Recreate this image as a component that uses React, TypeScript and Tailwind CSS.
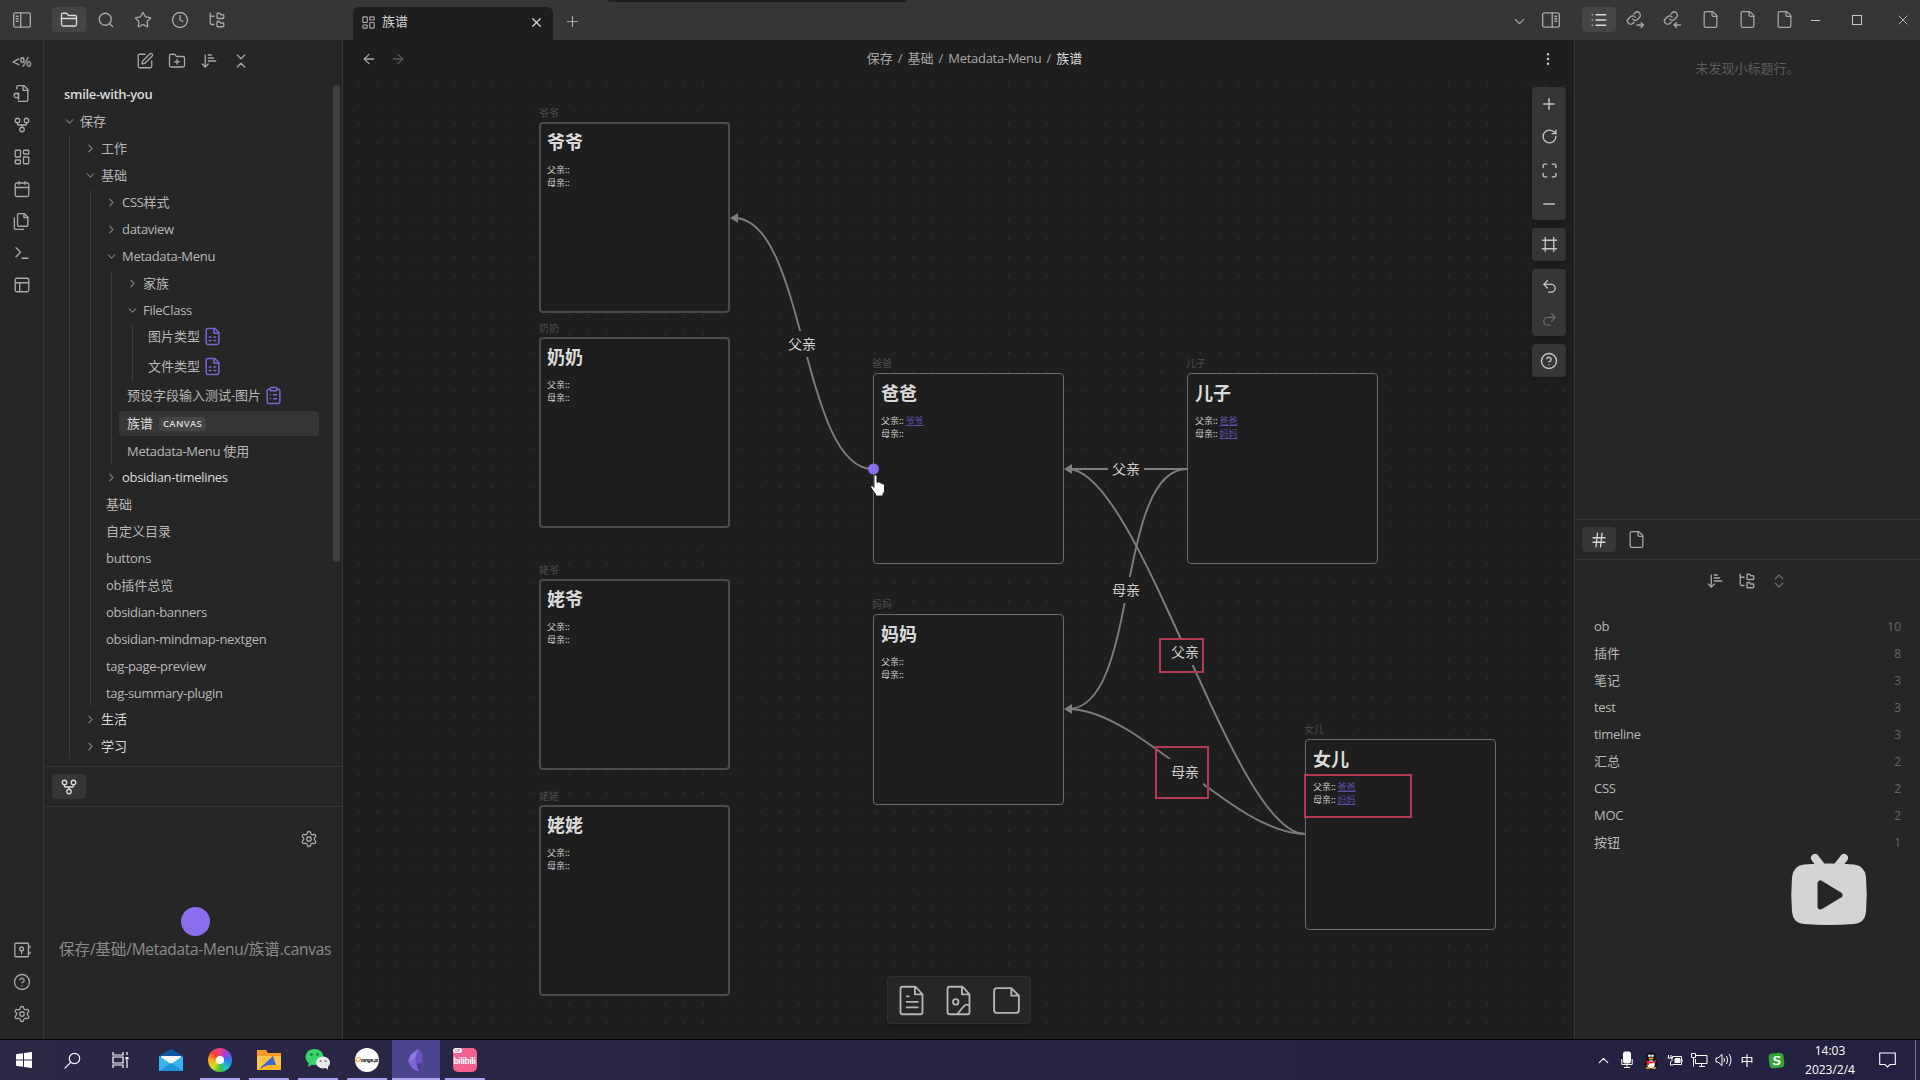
import React from "react";
import type { ReactNode } from "react";
import {
  FolderClosed, Search, Star, Clock, FolderTree, SquarePen, FolderPlus, ArrowDownNarrowWide,
  ChevronsDownUp, ChevronsUpDown, GitFork, LayoutDashboard, PanelsTopLeft, CircleQuestionMark,
  Settings, X, Plus, Minus, ChevronDown, ChevronRight, ChevronUp, ArrowLeft, ArrowRight, EllipsisVertical,
  List, File, RotateCw, Maximize, Frame, Undo2, Redo2, Hash, ClipboardList,
} from "lucide-react";

const I = { size: 18, strokeWidth: 1.75 };

function Svg({ size = 18, sw = 1.75, children, className = "" }: { size?: number; sw?: number; children: ReactNode; className?: string }) {
  return (
    <svg width={size} height={size} viewBox="0 0 24 24" fill="none" stroke="currentColor" strokeWidth={sw} strokeLinecap="round" strokeLinejoin="round" className={className}>
      {children}
    </svg>
  );
}

/* Latin runs are set slightly tighter than the Chinese text around them. */
function Txt({ children }: { children: string }) {
  return (
    <>
      {children.split(/([\x20-\x7e]+)/).filter(Boolean).map((part, i) =>
        /^[\x20-\x7e]/.test(part) ? <span key={i} className="tracking-[-0.3px]">{part}</span> : part
      )}
    </>
  );
}

function PanelIcon({ right = false }: { right?: boolean }) {
  return (
    <Svg size={20} sw={1.6} className={right ? "-scale-x-100" : ""}>
      <rect x="2" y="3.5" width="20" height="17" rx="2" />
      <path d="M10.500 3.500v17M5 7.500h2.500M5 10.500h2.500M5 13.500h2.500" />
    </Svg>
  );
}

function LinkIcon({ incoming = false }: { incoming?: boolean }) {
  return (
    <Svg size={19} sw={1.7} className="-ml-px">
      <path d="M8.500 11.500a4 4 0 0 0 6 .4l2.500-2.500a4 4 0 0 0-5.700-5.700l-1.400 1.400" />
      <path d="M11.600 9a4 4 0 0 0-6-.4L3.100 11.100a4 4 0 0 0 5.700 5.700l1.400-1.400" />
      {incoming ? <path d="M22 19h-8M17 16l-3 3 3 3" /> : <path d="M14 19h8M19 16l3 3-3 3" />}
    </Svg>
  );
}

function FileSearchLeft() {
  return (
    <Svg size={19} sw={1.7}>
      <path d="M6 6V4a2 2 0 0 1 2-2h7l5 5v13a2 2 0 0 1-2 2H8" />
      <path d="M14 2v6h6" />
      <circle cx="5.500" cy="14.500" r="2.800" />
      <path d="M8.300 11.500v8" />
    </Svg>
  );
}

function FileFields() {
  return (
    <Svg size={19} sw={1.9}>
      <path d="M15 2H6a2 2 0 0 0-2 2v16a2 2 0 0 0 2 2h12a2 2 0 0 0 2-2V7Z" />
      <path d="M14 2v6h6M8 12.500h2M14 12.500h2M8 17h2M14 17h2" />
    </Svg>
  );
}

function Btn({ active = false, children }: { active?: boolean; children: ReactNode }) {
  return (
    <div className={"flex h-[25px] w-[34px] shrink-0 items-center justify-center rounded " + (active ? "bg-[#454545] text-[#dadada]" : "")}>
      {children}
    </div>
  );
}

function TitleBar() {
  return (
    <header className="relative flex h-10 shrink-0 bg-[#363636] text-[#a8a8a8]">
      <div className="absolute left-[608px] top-0 h-[2px] w-[299px] rounded-b bg-[#1f1f1f]" />
      <div className="flex w-[353px] pt-[7px]">
        <div className="flex h-[25px] w-[52px] items-center pl-3"><PanelIcon /></div>
        <div className="flex gap-[3px]">
          <Btn active><FolderClosed {...I} /></Btn>
          <Btn><Search {...I} /></Btn>
          <Btn><Star {...I} /></Btn>
          <Btn><Clock {...I} /></Btn>
          <Btn><FolderTree {...I} /></Btn>
        </div>
      </div>
      <div className="mt-[7px] flex h-[33px] w-[200px] items-center rounded-t-md bg-[#1e1e1e] pb-[3px] pl-[8px] pr-[9px] text-[#d4d4d4]">
        <LayoutDashboard size={15} strokeWidth={1.9} className="text-[#a8a8a8]" />
        <span className="ml-[6px] flex-1 text-[13px]">族谱</span>
        <X size={15} strokeWidth={2} />
      </div>
      <div className="flex h-10 w-[38px] items-center justify-center pt-[2px]"><Plus size={17} strokeWidth={1.75} /></div>
      <div className="flex-1" />
      <div className="flex items-center">
        <div className="flex w-8 justify-center pt-[2px]"><ChevronDown size={17} strokeWidth={1.75} /></div>
        <div className="flex w-8 justify-center"><PanelIcon right /></div>
      </div>
      <div className="ml-[15px] mt-[7px] flex h-[25px] gap-[3px]">
        <Btn active><List {...I} /></Btn>
        <Btn><LinkIcon /></Btn>
        <Btn><LinkIcon incoming /></Btn>
        <Btn><File size={19} strokeWidth={1.6} /></Btn>
        <Btn><File size={19} strokeWidth={1.6} /></Btn>
        <Btn><File size={19} strokeWidth={1.6} /></Btn>
      </div>
      <div className="flex w-[119px] items-center pl-[10px] text-[#c0c0c0]">
        <div className="h-px w-[9px] bg-[#c8c8c8]" />
        <div className="ml-[32px] size-[10px] border border-[#c8c8c8]" />
        <Svg size={14} sw={1.5} className="ml-[34px]"><path d="M5 5l14 14M19 5L5 19" /></Svg>
      </div>
    </header>
  );
}

function Ribbon() {
  return (
    <nav className="flex w-11 shrink-0 flex-col items-center border-r border-[#363636] pt-[5px] text-[#a8a8a8]">
      {[
        <span className="text-[14px] font-semibold tracking-tight">&lt;%</span>,
        <FileSearchLeft />,
        <GitFork {...I} />,
        <LayoutDashboard {...I} />,
        <Svg><rect x="3" y="4" width="18" height="18" rx="2" /><path d="M16 2v4M8 2v4M3 10h18" /></Svg>,
        <Svg size={19}><path d="M15.500 2H8.600C7.700 2 7 2.700 7 3.600v12.800c0 .9.700 1.600 1.600 1.600h9.800c.9 0 1.600-.7 1.600-1.600V6.500z" /><path d="M3 7.600v12.800c0 .9.700 1.600 1.600 1.600h9.800M15 2v5h5" /></Svg>,
        <Svg><path d="M4 17l6-6-6-6M12 19h8" /></Svg>,
        <PanelsTopLeft {...I} />,
      ].map((ic, i) => (
        <div key={i} className="flex h-8 w-full items-center justify-center">{ic}</div>
      ))}
      <div className="flex-1" />
      <div className="flex h-8 items-center">
        <Svg><rect x="2.500" y="3" width="18" height="18" rx="1" /><circle cx="11.500" cy="10.500" r="2.500" /><path d="M11.500 13v4M22.500 7v2M22.500 15v2" /></Svg>
      </div>
      <div className="flex h-8 items-center"><CircleQuestionMark {...I} /></div>
      <div className="mb-[9px] flex h-8 items-center"><Settings {...I} /></div>
    </nav>
  );
}

type RowProps = { name: string; fold?: "open" | "closed"; icon?: ReactNode; mt?: string; bright?: boolean };

function Row({ name, fold, icon, mt = "mt-[2px]", bright = false }: RowProps) {
  return (
    <div className={"flex h-[25px] items-center whitespace-nowrap " + mt + (bright ? " text-[#dcdcdc]" : "")}>
      {fold ? (
        <span className="-ml-[3px] flex w-[17px] text-[#7a7a7a]">
          {fold === "open" ? <ChevronDown size={13} strokeWidth={2.2} /> : <ChevronRight size={13} strokeWidth={2.2} />}
        </span>
      ) : null}
      <span><Txt>{name}</Txt></span>
      {icon ? <span className="ml-[3px] text-[#7d64d0]">{icon}</span> : null}
    </div>
  );
}

function Tree() {
  return (
    <div className="mt-[2px] pl-[21px] text-[13px] text-[#b8b8b8]">
      <div className="ml-px mt-px"><Row name="保存" fold="open" mt="" /></div>
      <div className="ml-[4px] border-l border-[#3c3c3c] pl-[17px]">
        <Row name="工作" fold="closed" />
        <Row name="基础" fold="open" />
        <div className="ml-[3px] border-l border-[#3c3c3c] pl-[17px]">
          <Row name="CSS样式" fold="closed" />
          <Row name="dataview" fold="closed" />
          <Row name="Metadata-Menu" fold="open" />
          <div className="ml-[3px] border-l border-[#3c3c3c] pl-[17px]">
            <Row name="家族" fold="closed" />
            <Row name="FileClass" fold="open" />
            <div className="ml-[3px] border-l border-[#3c3c3c] pb-[2px] pl-[15px]">
              <Row name="图片类型" icon={<FileFields />} mt="mt-px" />
              <Row name="文件类型" icon={<FileFields />} mt="mt-[5px]" />
            </div>
            <div className="-ml-[2px]">
              <Row name="预设字段输入测试-图片" icon={<ClipboardList size={19} strokeWidth={1.9} />} />
              <div className="-ml-2 mt-[3px] flex h-[25px] w-[200px] items-center rounded bg-[#363636] pl-2 text-[#dcdcdc]">
                <span>族谱</span>
                <span className="ml-[6px] rounded bg-[#454545] px-1 text-[9.500px] font-semibold leading-[14px] tracking-[0.3px]">CANVAS</span>
              </div>
              <Row name="Metadata-Menu 使用" mt="mt-[3px]" />
            </div>
          </div>
          <div className="-mt-px"><Row name="obsidian-timelines" fold="closed" bright /></div>
          <div className="-ml-[2px]">
            <Row name="基础" />
            <Row name="自定义目录" />
            <Row name="buttons" />
            <Row name="ob插件总览" />
            <Row name="obsidian-banners" />
            <Row name="obsidian-mindmap-nextgen" />
            <Row name="tag-page-preview" />
            <Row name="tag-summary-plugin" />
          </div>
        </div>
        <Row name="生活" fold="closed" bright mt="mt-px" />
        <Row name="学习" fold="closed" bright />
      </div>
    </div>
  );
}

function LeftSidebar() {
  return (
    <aside className="flex w-[299px] shrink-0 flex-col border-r border-[#363636]">
      <div className="flex h-[42px] items-center gap-[14px] pl-[92px] text-[#a8a8a8]">
        <SquarePen {...I} />
        <FolderPlus {...I} />
        <ArrowDownNarrowWide {...I} />
        <ChevronsDownUp {...I} />
      </div>
      <div className="relative h-[684px] shrink-0 overflow-hidden">
        <div className="h-[25px] pl-5 text-[13px] font-semibold leading-[25px] text-[#dadada]"><Txt>smile-with-you</Txt></div>
        <Tree />
        <div className="absolute right-[2px] top-[3px] h-[477px] w-[7px] rounded-full bg-[#3f3f3f]" />
      </div>
      <div className="flex h-[41px] shrink-0 border-y border-[#363636] pl-2 pt-[7px]">
        <div className="flex h-[25px] w-[34px] items-center justify-center rounded bg-[#363636] text-[#dadada]"><GitFork {...I} /></div>
      </div>
      <div className="flex flex-1 flex-col items-center">
        <div className="mt-[23px] self-end pr-[24px] text-[#a8a8a8]"><Settings {...I} /></div>
        <div className="mr-[-5px] mt-[59px] size-[29px] rounded-full bg-[#8a6ded]" />
        <div className="mr-[-4px] mt-[2px] whitespace-nowrap text-[15.500px] leading-[22px] text-[#8c8c8c]"><Txt>保存/基础/Metadata-Menu/族谱.canvas</Txt></div>
      </div>
    </aside>
  );
}

type Node = { name: string; pos: string; thick?: boolean; father?: string; mother?: string };

const nodes: Node[] = [
  { name: "爷爷", pos: "left-[196px] top-[44px]", thick: true },
  { name: "奶奶", pos: "left-[196px] top-[259px]", thick: true },
  { name: "姥爷", pos: "left-[196px] top-[501px]", thick: true },
  { name: "姥姥", pos: "left-[196px] top-[727px]", thick: true },
  { name: "爸爸", pos: "left-[530px] top-[295px]", father: "爷爷" },
  { name: "妈妈", pos: "left-[530px] top-[535.500px]" },
  { name: "儿子", pos: "left-[844px] top-[295px]", father: "爸爸", mother: "妈妈" },
  { name: "女儿", pos: "left-[962px] top-[661px]", father: "爸爸", mother: "妈妈" },
];

function Field({ label, value }: { label: string; value?: string }) {
  return (
    <div>
      {label}<span className="font-semibold tracking-[-0.2px]">::</span>{value ? <span className="ml-[2px] text-[#5f4da8] underline">{value}</span> : null}
    </div>
  );
}

function Card({ n }: { n: Node }) {
  return (
    <div className={"absolute size-[191px] rounded-[4px] bg-[#1e1e1e] " + n.pos + (n.thick ? " border-2 border-[#4c4c4c] p-[6px]" : " border border-[#6a6a6a] p-[7px]")}>
      <div className="absolute -top-[18px] -left-[2px] text-[10px] leading-[14px] text-[#4d4d4d]">{n.name}</div>
      <div className="-mt-px text-[18px] font-bold leading-[26px] text-[#dadada]">{n.name}</div>
      <div className="mt-[8px] text-[9px] leading-[13px] text-[#cfcfcf]">
        <Field label="父亲" value={n.father} />
        <Field label="母亲" value={n.mother} />
      </div>
    </div>
  );
}

function EdgeLabel({ pos, text }: { pos: string; text: string }) {
  return <div className={"absolute h-[26px] w-[36px] bg-[#1e1e1e] text-center text-[14px] leading-[26px] text-[#cfcfcf] " + pos}>{text}</div>;
}

function Canvas() {
  return (
    <main className="flex w-[1231px] shrink-0 flex-col bg-[#1e1e1e]">
      <div className="flex h-[38px] shrink-0 items-center text-[13px] text-[#a8a8a8]">
        <div className="flex w-[300px] gap-[13px] pl-[18px]">
          <ArrowLeft size={16} strokeWidth={1.900} />
          <ArrowRight size={16} strokeWidth={1.900} className="text-[#5a5a5a]" />
        </div>
        <div className="flex flex-1 justify-center gap-[5px] pl-[32px]">
          <span>保存</span><span>/</span><span>基础</span><span>/</span><span><Txt>Metadata-Menu</Txt></span><span>/</span>
          <span className="text-[#dadada]">族谱</span>
        </div>
        <div className="flex w-[300px] justify-end pr-[18px] text-[#cfcfcf]"><EllipsisVertical size={16} strokeWidth={1.700} /></div>
      </div>
      <div className="relative flex-1 overflow-hidden bg-[radial-gradient(circle_at_50%_50%,#2b2b2b_0.8px,transparent_1.100px)] bg-[length:19.13px_19.13px] bg-[position:6.200px_-2.300px]">
        {nodes.map((n) => <Card key={n.name} n={n} />)}
        <svg width="1231" height="961" viewBox="343 78 1231 961" className="absolute left-0 top-0" fill="none" stroke="#7d7d7d" strokeWidth="1.900">
          <path d="M873 469C801 469 806 218 734 218" />
          <path d="M1187 469H1068" />
          <path d="M1187 469C1115 469 1140 709 1068 709" />
          <path d="M1305 834C1233 834 1140 469 1068 469" />
          <path d="M1305 834C1233 834 1140 709 1068 709" />
          <g fill="#7d7d7d" stroke="none">
            <path d="M730 218l8-5v10z" />
            <path d="M1064 469l8-5v10z" />
            <path d="M1064 709l8-5v10z" />
          </g>
          <circle cx="873.500" cy="469" r="5.500" fill="#8a6ded" stroke="none" />
        </svg>
        <EdgeLabel pos="left-[441px] top-[253px]" text="父亲" />
        <EdgeLabel pos="left-[765px] top-[378px]" text="父亲" />
        <EdgeLabel pos="left-[765px] top-[499px]" text="母亲" />
        <EdgeLabel pos="left-[824px] top-[561px]" text="父亲" />
        <EdgeLabel pos="left-[824px] top-[681px]" text="母亲" />
        <div className="absolute left-[816px] top-[560px] h-[35px] w-[45px] border-2 border-[#b23a52]" />
        <div className="absolute left-[812px] top-[668px] h-[53px] w-[54px] border-2 border-[#b23a52]" />
        <div className="absolute left-[961px] top-[696px] h-[44px] w-[108px] border-2 border-[#b23a52]" />
        <svg width="18" height="24" viewBox="0 0 18 24" className="absolute left-[526px] top-[396px]">
          <path d="M5 2.500c0-2 3-2 3 0v6l1-.5c1-.5 1.900 0 2 1 .8-.5 2-.2 2.200 1 1-.4 2.300.2 2.300 1.500v4.500c0 2-.8 3-1.500 4v2H6.500v-2c-1.500-1.500-3-4-4.500-6.500-.8-1.600.8-2.600 2-1.300l1 1.200z" fill="#fff" stroke="#111" strokeWidth="0.900" />
        </svg>
        <div className="absolute right-2 top-[9px] flex w-[34px] flex-col gap-2 text-[#c4c4c4]">
          <Tools>
            <Plus size={18} strokeWidth={1.900} /><RotateCw size={17} strokeWidth={1.900} /><Maximize size={17} strokeWidth={1.900} /><Minus size={18} strokeWidth={1.900} />
          </Tools>
          <Tools><Frame size={17} strokeWidth={1.900} /></Tools>
          <Tools><Undo2 size={17} strokeWidth={1.900} /><Redo2 size={17} strokeWidth={1.900} className="text-[#6a6a6a]" /></Tools>
          <Tools><CircleQuestionMark size={18} strokeWidth={1.900} /></Tools>
        </div>
        <div className="absolute left-[544px] top-[898px] flex h-12 w-36 items-center justify-around rounded border border-[#303030] bg-[#262626] text-[#b4b4b4] shadow-md">
          <Svg size={33} sw={1.350}><path d="M15 2H5.500A1.500 1.500 0 0 0 4 3.500v17A1.500 1.500 0 0 0 5.500 22h13a1.500 1.500 0 0 0 1.500-1.500V7.500zM14.500 2v5.500H20M8.500 9h1.500M8.500 13h8M8.500 17h8" /></Svg>
          <Svg size={33} sw={1.350}><path d="M15 2H5.500A1.500 1.500 0 0 0 4 3.500v17A1.500 1.500 0 0 0 5.500 22h13a1.500 1.500 0 0 0 1.500-1.500V7.500zM14.500 2v5.500H20M11 22l5-6c1.500-1.500 2.500-1.500 4 0" /><circle cx="10" cy="13" r="2" /></Svg>
          <Svg size={33} sw={1.350}><path d="M15.500 3H5a2 2 0 0 0-2 2v14a2 2 0 0 0 2 2h14a2 2 0 0 0 2-2V8.500zM15.500 3v5.500H21" /></Svg>
        </div>
      </div>
    </main>
  );
}

function Tools({ children }: { children: ReactNode }) {
  return (
    <div className="flex flex-col rounded bg-[#363636] shadow-md">
      {React.Children.map(children, (c) => <div className="flex h-[33.300px] items-center justify-center">{c}</div>)}
    </div>
  );
}

const tags: [string, number][] = [["ob", 10], ["插件", 8], ["笔记", 3], ["test", 3], ["timeline", 3], ["汇总", 2], ["CSS", 2], ["MOC", 2], ["按钮", 1]];

function RightSidebar() {
  return (
    <aside className="relative flex flex-1 flex-col border-l border-[#363636]">
      <div className="h-[479px] shrink-0 pt-[18px] text-center text-[13px] leading-5 text-[#5c5c5c]">未发现小标题行。</div>
      <div className="flex h-[41px] shrink-0 gap-[3px] border-y border-[#363636] pl-[7px] pt-[7px] text-[#a8a8a8]">
        <div className="flex h-[25px] w-[34px] items-center justify-center rounded bg-[#363636] text-[#dadada]"><Hash {...I} /></div>
        <Btn><File size={19} strokeWidth={1.600} /></Btn>
      </div>
      <div className="flex h-[42px] items-center gap-[14px] pl-[131px] text-[#a8a8a8]">
        <ArrowDownNarrowWide {...I} />
        <FolderTree {...I} />
        <ChevronsUpDown {...I} className="text-[#6a6a6a]" />
      </div>
      <ul className="mt-[11px] pl-[19px] pr-[19px] text-[13px] text-[#b8b8b8]">
        {tags.map(([t, n]) => (
          <li key={t} className="relative flex h-[27px] items-center justify-between">
            <span><Txt>{t}</Txt></span>
            <span className="text-[12px] text-[#666]">{n}</span>
            <span className="absolute bottom-0 left-1 size-px bg-[#444]" />
          </li>
        ))}
      </ul>
      <svg width="80" height="76" viewBox="0 0 80 76" className="absolute left-[214px] top-[812px]">
        <path d="M26 6l7 9M55 6l-7 9" stroke="#d4d4d4" strokeWidth="8" strokeLinecap="round" />
        <path d="M15 12.500Q40 10.500 65 12.500Q76 14 77 25Q78.500 43 77 60Q76 71 65 72Q40 74 15 72Q4 71 3 60Q1.500 43 3 25Q4 14 15 12.500z" fill="#d4d4d4" />
        <path d="M31.500 31.500v23l19-11.500z" fill="#262626" stroke="#262626" strokeWidth="6" strokeLinejoin="round" />
      </svg>
    </aside>
  );
}

function TaskItem({ children, line = true, active = false }: { children: ReactNode; line?: boolean; active?: boolean }) {
  return (
    <div className="flex w-[49px] justify-center">
      <div className={"flex h-10 flex-col items-center justify-end " + (active ? "w-12 bg-[#4a458c]" : "w-10")}>
        <div className="flex h-[38px] items-center justify-center pt-[2px]">{children}</div>
        <div className={"h-[2px] w-full " + (line ? "bg-[#aaa2ee]" : "")} />
      </div>
    </div>
  );
}

function Taskbar() {
  return (
    <footer className="flex h-[41px] shrink-0 border-t border-black bg-linear-to-r from-[#2b2847] to-[#242140] text-white">
      <div className="flex w-12 items-center justify-center">
        <svg width="16" height="16" viewBox="0 0 16 16" fill="#fff"><path d="M0 2.200l7-1v6.300H0zM8 1.050L16 0v7.500H8zM0 8.500h7v6.300l-7-1zM8 8.500h8V16l-8-1.100z" /></svg>
      </div>
      <div className="flex w-12 items-center justify-center">
        <svg width="17" height="17" viewBox="0 0 17 17" fill="none" stroke="#fff" strokeWidth="1.200"><circle cx="10.500" cy="6.500" r="5.200" /><path d="M6.700 10.300L.7 16.300" /></svg>
      </div>
      <div className="flex w-[50px] items-center justify-center pr-[2px]">
        <svg width="17" height="16" viewBox="0 0 17 16" fill="none" stroke="#fff" strokeWidth="1.200"><path d="M1 0v3h10V0M1 16v-3h10v3M1 5h10v6H1zM15 0v3M15 8v8" /><path d="M13.500 5h3v2.500h-3z" fill="#fff" stroke="none" /></svg>
      </div>
      <TaskItem line={false}>
        <svg width="24" height="24" viewBox="0 0 24 24"><path d="M0 8L12 1l12 7v4H0z" fill="#0c59a4" /><path d="M2 8h20v10H2z" fill="#f2f8fc" /><path d="M0 8l12 8 12-8v15H0z" fill="#35b4ee" /><path d="M0 23l12-8 12 8z" fill="#1d94dc" /></svg>
      </TaskItem>
      <TaskItem>
        <div className="flex size-6 items-center justify-center rounded-full bg-[conic-gradient(#ef3d8a,#9b3fe0,#3079ee,#20bfd9,#41c53c,#d8dc25,#fba81a,#f34035,#ef3d8a)]"><div className="size-[8px] rounded-full bg-white" /></div>
      </TaskItem>
      <TaskItem>
        <svg width="24" height="22" viewBox="0 0 24 22"><path d="M0 1h9l2 3h13v17H0z" fill="#f79a28" /><path d="M0 7h24v14H0z" fill="#fdc54b" /><path d="M2 20L16 7l3 9z" fill="#3c68d8" /><path d="M0 21l11-5h13v5z" fill="#fcb716" /></svg>
      </TaskItem>
      <TaskItem>
        <svg width="26" height="24" viewBox="0 0 26 24"><ellipse cx="9.500" cy="9" rx="9" ry="8" fill="#35d569" /><path d="M4 14l-1 5 5-3z" fill="#35d569" /><circle cx="6.500" cy="6.500" r="1.200" fill="#186e37" /><circle cx="12.500" cy="6.500" r="1.200" fill="#186e37" /><ellipse cx="18" cy="14.500" rx="7" ry="6" fill="#e8eae9" /><path d="M20 19l3 3v-4z" fill="#e8eae9" /><circle cx="15.500" cy="13" r="1" fill="#777" /><circle cx="20.500" cy="13" r="1" fill="#777" /></svg>
      </TaskItem>
      <TaskItem>
        <div className="flex size-6 items-center justify-center overflow-hidden rounded-full bg-white font-[Liberation_Sans] text-[5px] font-bold italic leading-none tracking-[-0.3px] text-black"><span className="text-[8px] text-[#eda233]">O</span>range.pi</div>
      </TaskItem>
      <TaskItem active>
        <svg width="15" height="23" viewBox="0 0 15 23"><path d="M10 0l4.500 4v10L11 22.500l-6-2.500L0 12.500 3 5.500z" fill="#6c53c4" /><path d="M10 0L7 10 0 12.500 3 5.500z" fill="#8f79e0" /><path d="M7 10l4 12.500L5 20 0 12.500z" fill="#7e66d2" /><path d="M14.500 14L11 22.500 8.500 15z" fill="#4d38a0" /></svg>
      </TaskItem>
      <TaskItem>
        <div className="relative flex size-6 items-center justify-center rounded-[5px] bg-[#f1638f]">
          <span className="absolute left-0 top-0 rounded-sm bg-white px-[2px] text-[4px] font-bold leading-[5px] text-[#f1638f]">UP</span>
          <span className="pt-[2px] font-[Liberation_Sans] text-[8.500px] font-bold leading-none tracking-[-0.3px] text-white">bilibili</span>
        </div>
      </TaskItem>
      <div className="flex-1" />
      <div className="flex items-center">
        <div className="flex w-6 justify-center"><ChevronUp size={17} strokeWidth={1.500} /></div>
        <div className="flex w-6 justify-center">
          <svg width="12" height="18" viewBox="0 0 12 18" fill="none" stroke="#fff"><rect x="2.500" y="1" width="7" height="11" rx="1.500" fill="#fff" /><path d="M.8 8v5.500h10.400V8M6 13.500v3M3 16.500h6" /></svg>
        </div>
        <div className="flex w-6 justify-center">
          <svg width="16" height="17" viewBox="0 0 16 17"><ellipse cx="8" cy="10.500" rx="6" ry="6" fill="#111" /><path d="M1 13l3-5h8l3 5-2 .5H3z" fill="#111" /><circle cx="8" cy="5" r="4.800" fill="#111" /><ellipse cx="8" cy="12.300" rx="3.800" ry="4" fill="#fff" /><circle cx="6.500" cy="3.800" r="1.300" fill="#fff" /><circle cx="9.500" cy="3.800" r="1.300" fill="#fff" /><ellipse cx="8" cy="6.500" rx="2.500" ry="1" fill="#f4a71c" /><path d="M3 8q5 3 10 0v2q-5 2-7 1.500V13H4z" fill="#e0242b" /><path d="M3 16h4M9 16h4" stroke="#f4a71c" strokeWidth="1.500" /></svg>
        </div>
        <div className="flex w-6 justify-center">
          <svg width="17" height="13" viewBox="0 0 17 13" fill="none" stroke="#fff"><path d="M5.500 4V2.500h9v8H6" /><path d="M8 4.500h5v4H8z" fill="#fff" /><path d="M15 5v3M1.500 1v3M4 1v3M.5 4h4.500v2.500L3.500 8v3H6" /></svg>
        </div>
        <div className="flex w-6 justify-center">
          <svg width="17" height="15" viewBox="0 0 17 15" fill="none" stroke="#fff"><path d="M5 2.500h11v8H4.500V6M8 13.500h6M10.500 10.500v3M.5.500h4v4h-4zM2.500 4.500v9" /></svg>
        </div>
        <div className="flex w-6 justify-center">
          <svg width="17" height="14" viewBox="0 0 17 14" fill="none" stroke="#fff"><path d="M1 5v4h2l4 3.500v-11L3 5zM9 5q1 2 0 4M11.500 3q2.500 4 0 8M14 1q4 6 0 12" /></svg>
        </div>
        <div className="w-6 text-center text-[13px] leading-none">中</div>
        <div className="ml-[9px] flex w-4 justify-center">
          <div className="flex size-[15px] -rotate-6 items-center justify-center rounded-sm bg-[#33a534] font-[Liberation_Sans] text-[13px] font-bold italic leading-none text-white">S</div>
        </div>
        <div className="w-[92px] text-center text-[12px] leading-[19px]">
          <div>14:03</div>
          <div>2023/2/4</div>
        </div>
        <div className="flex w-[22px] justify-center">
          <svg width="17" height="17" viewBox="0 0 17 17" fill="none" stroke="#fff" strokeWidth="1.100"><path d="M.7 1h15.600v11.500H11L8.500 15 6 12.500H.7z" /></svg>
        </div>
        <div className="ml-[17px] mr-1 h-10 w-px bg-[#77749a]" />
      </div>
    </footer>
  );
}

export default function App() {
  return (
    <div className="flex h-[1080px] w-[1920px] flex-col overflow-hidden bg-[#262626] font-['Open_Sans','Noto_Sans_CJK_SC',sans-serif]">
      <TitleBar />
      <div className="flex min-h-0 flex-1">
        <Ribbon />
        <LeftSidebar />
        <Canvas />
        <RightSidebar />
      </div>
      <Taskbar />
    </div>
  );
}
